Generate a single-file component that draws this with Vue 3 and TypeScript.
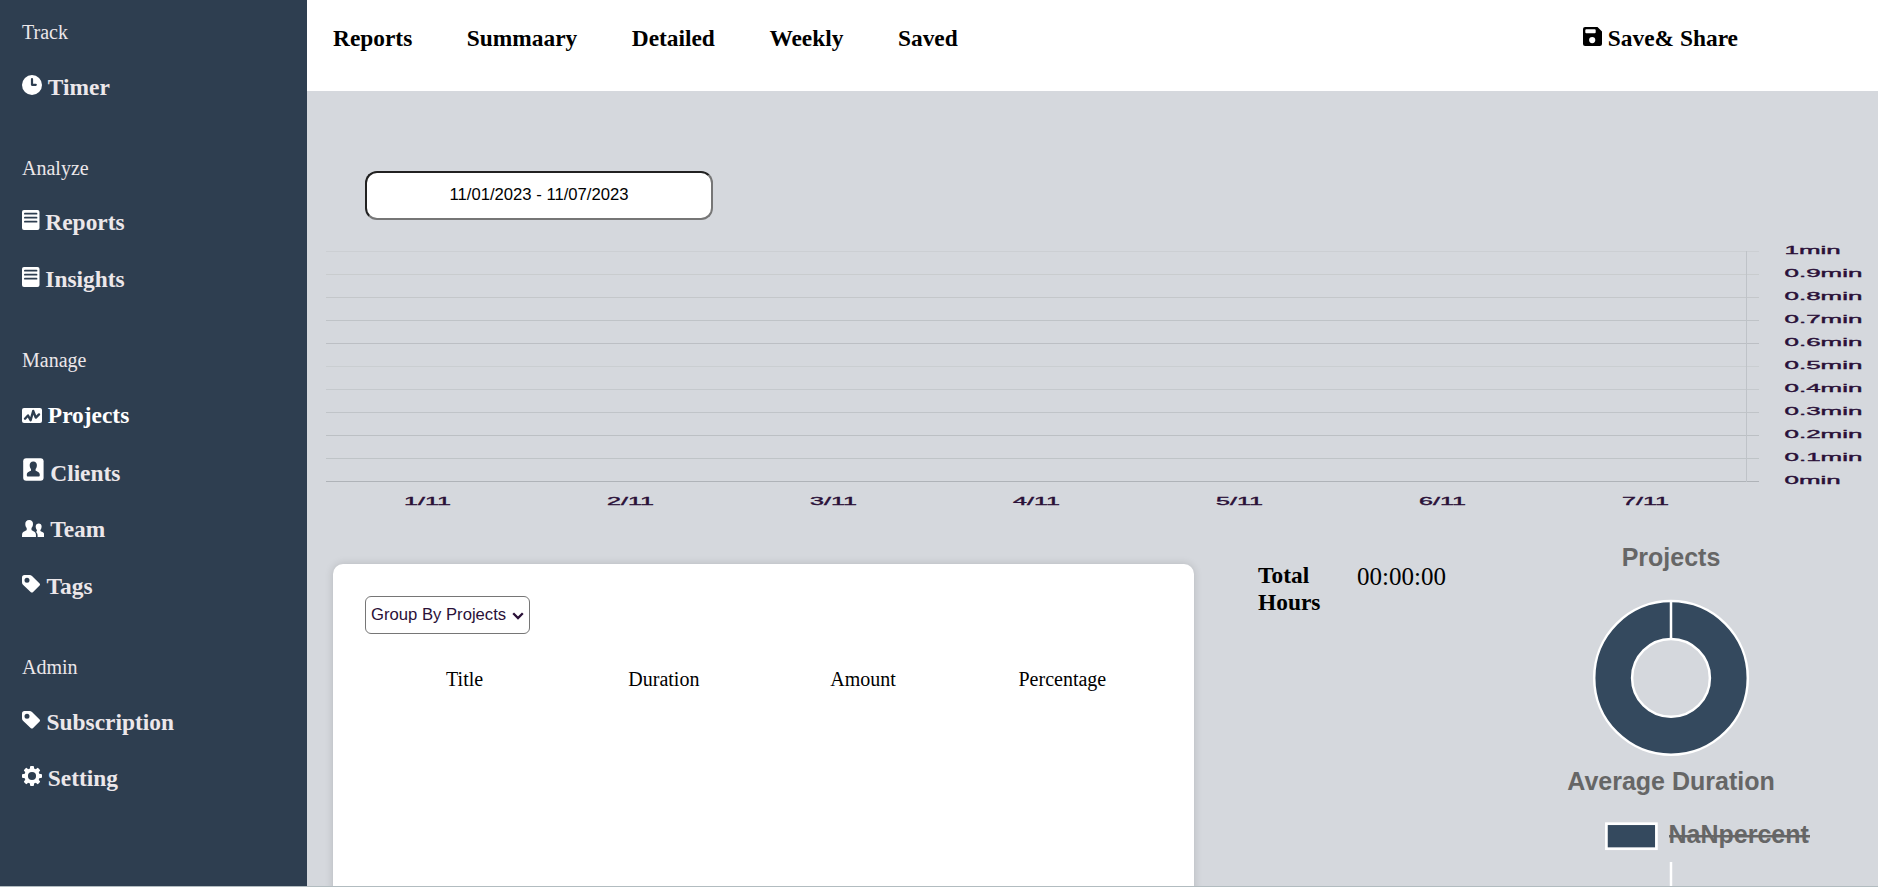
<script setup lang="ts">
interface NavItem {
  label: string
  icon: string
  active?: boolean
}
interface NavGroup {
  title: string
  items: NavItem[]
}

const groups: NavGroup[] = [
  { title: 'Track', items: [{ label: 'Timer', icon: 'clock' }] },
  {
    title: 'Analyze',
    items: [
      { label: 'Reports', icon: 'note' },
      { label: 'Insights', icon: 'note' },
    ],
  },
  {
    title: 'Manage',
    items: [
      { label: 'Projects', icon: 'pulse', active: true },
      { label: 'Clients', icon: 'badge' },
      { label: 'Team', icon: 'people' },
      { label: 'Tags', icon: 'tag' },
    ],
  },
  {
    title: 'Admin',
    items: [
      { label: 'Subscription', icon: 'tag' },
      { label: 'Setting', icon: 'gear' },
    ],
  },
]

const tabs: string[] = ['Reports', 'Summaary', 'Detailed', 'Weekly', 'Saved']
const columns: string[] = ['Title', 'Duration', 'Amount', 'Percentage']
const days: string[] = ['1/11', '2/11', '3/11', '4/11', '5/11', '6/11', '7/11']
const teeth: number[] = [0, 45, 90, 135, 180, 225, 270, 315]

const ticks = [
  { label: '1min', color: '#cccfd3' },
  { label: '0.9min', color: '#c9ccce' },
  { label: '0.8min', color: '#c4c7ca' },
  { label: '0.7min', color: '#bfc3c7' },
  { label: '0.6min', color: '#bcbfc4' },
  { label: '0.5min', color: '#caced1' },
  { label: '0.4min', color: '#c5c9cd' },
  { label: '0.3min', color: '#c0c4c8' },
  { label: '0.2min', color: '#bcc0c4' },
  { label: '0.1min', color: '#bfc4c7' },
  { label: '0min', color: '#afb3b8' },
]
</script>

<template>
  <div class="app">
    <div class="shell">
      <aside class="sidebar">
        <section v-for="g in groups" :key="g.title" class="group">
          <div class="group-title">{{ g.title }}</div>
          <div
            v-for="item in g.items"
            :key="item.label"
            class="item"
            :class="[`item-${item.icon}`, { active: item.active }]"
          >
            <svg v-if="item.icon === 'clock'" class="icon" width="20" height="20" viewBox="0 0 20 20">
              <circle cx="10" cy="10" r="10" />
              <path class="cut-line" d="M10 4.200v5.600h3.800" />
            </svg>
            <svg v-else-if="item.icon === 'note'" class="icon" width="17.5" height="20" viewBox="0 0 17.5 20">
              <rect width="17.5" height="20" rx="2" />
              <path class="cut-thin" d="M2.900 3.700h11.600M2.900 7.700h11.600M2.900 11.700h11.600" />
            </svg>
            <svg v-else-if="item.icon === 'pulse'" class="icon" width="20" height="15" viewBox="0 0 20 15">
              <rect width="20" height="15" rx="2" />
              <path class="cut-pulse" d="M3 10.700l3-3.200 2.600 4.800L11.200 3l2.600 6.600L17 6.400" />
            </svg>
            <svg v-else-if="item.icon === 'badge'" class="icon" width="22.4" height="23" viewBox="0 0 22.4 23">
              <rect x="1.2" y="0.2" width="20.4" height="22.6" rx="3" />
              <path
                class="cut"
                d="M11.300 3.600c-2.500 0-3.800 1.700-3.600 4.100.1 1.500.7 2.500 1.300 3.300v1.700c-1.700.9-4 1.300-4.200 4-.1 1.200.4 1.900 1.400 1.900h10.200c1 0 1.500-.7 1.400-1.900-.2-2.700-2.500-3.100-4.200-4v-1.700c.6-.8 1.200-1.800 1.300-3.300.2-2.400-1.100-4.100-3.600-4.100z"
              />
            </svg>
            <svg v-else-if="item.icon === 'people'" class="icon" width="22.4" height="17" viewBox="0 0 22.4 17">
              <path
                d="M7.200 0C4.600 0 3.100 1.700 3.300 4.300c.1 1.700.6 2.900 1.400 3.700v2C3.300 11.200.5 11.500.1 14.200L0 17h14l-.1-2.800C13.500 11.500 10.900 11.200 9.500 10V8c.8-.8 1.400-2 1.500-3.700C11.200 1.700 9.700 0 7.200 0z"
              />
              <path
                d="M16.800 3.500c-1.900 0-3.300 1.300-3.100 3.600.1 1.300.6 2.300 1.200 3v1.200l-1 .5c1 .8 1.500 1.900 1.700 3.200L15.600 17h6.800c.1-3.900-.8-4.400-2.100-5.100-.8-.4-1.500-.6-1.900-1V10c.6-.7 1.100-1.700 1.200-2.900.2-2.300-1-3.600-2.800-3.600z"
              />
            </svg>
            <svg v-else-if="item.icon === 'tag'" class="icon" width="18.75" height="20" viewBox="0 0 15 16">
              <path
                fill-rule="evenodd"
                d="M0 3Q0 .8 2 .8h4q1.200 0 2 .7l6.100 6.100q.7.800 0 1.600l-5.400 5.300q-.8.700-1.600 0L.8 8.500Q0 7.700 0 6.500zM4 2.900a2 2 0 1 0 0 4 2 2 0 0 0 0-4z"
              />
            </svg>
            <svg v-else class="icon" width="20" height="20" viewBox="0 0 20 20">
              <rect
                v-for="a in teeth"
                :key="a"
                x="8"
                y="0"
                width="4"
                height="5"
                rx="1"
                :transform="`rotate(${a} 10 10)`"
              />
              <circle class="gear-ring" cx="10" cy="10" r="5.900" />
            </svg>
            <span>{{ item.label }}</span>
          </div>
        </section>
      </aside>

      <main class="main">
        <header class="topbar">
          <nav class="tabs">
            <a v-for="t in tabs" :key="t" class="tab">{{ t }}</a>
          </nav>
          <div class="save">
            <svg class="save-icon" width="19" height="19" viewBox="0 0 19 19">
              <path
                fill-rule="evenodd"
                d="M2.100 0h12.400L19 4.500v12.400a2.100 2.100 0 0 1-2.100 2.100H2.100A2.100 2.100 0 0 1 0 16.900V2.100A2.100 2.100 0 0 1 2.100 0zM3.300 2.200q-1 0-1 1v2q0 1 1 1h8.400q1 0 1-1v-2q0-1-1-1zM9.200 10a3.100 3.100 0 1 0 0 6.200 3.100 3.100 0 0 0 0-6.200z"
              />
            </svg>
            <span>Save&amp; Share</span>
          </div>
        </header>

        <div class="range">11/01/2023 - 11/07/2023</div>

        <svg class="chart" width="1571" height="290" viewBox="307 230 1571 290">
          <g shape-rendering="crispEdges">
            <rect v-for="(t, i) in ticks" :key="t.label" x="326" :y="251 + 23 * i" width="1433" height="1" :fill="t.color" />
            <rect x="1746" y="251" width="1" height="231" fill="#bfc3c8" />
          </g>
          <text
            v-for="(t, i) in ticks"
            :key="'l' + t.label"
            class="axis"
            :transform="`translate(1784.5 ${254.300 + 23 * i}) scale(2.360 1)`"
          >{{ t.label }}</text>
          <text
            v-for="(d, i) in days"
            :key="d"
            class="axis mid"
            :transform="`translate(${427.5 + 203 * i} 505) scale(2.280 1)`"
          >{{ d }}</text>
        </svg>

        <div class="bottom">
          <section class="card">
            <div class="select">
              <span>Group By Projects</span>
              <svg width="12" height="8" viewBox="0 0 12 8"><path d="M1.200 1.200L6 6l4.800-4.800" /></svg>
            </div>
            <div class="thead">
              <div v-for="c in columns" :key="c">{{ c }}</div>
            </div>
          </section>

          <div class="total">
            <div class="total-label">Total Hours</div>
            <div class="total-value">00:00:00</div>
          </div>

          <svg class="donuts" width="320" height="346" viewBox="1511 540 320 346">
            <text class="title" x="1671" y="565.900">Projects</text>
            <circle cx="1671" cy="677.900" r="58" fill="none" stroke="#34495e" stroke-width="37.500" />
            <g fill="none" stroke="#fff" stroke-width="2.500">
              <circle cx="1671" cy="677.900" r="76.800" />
              <circle cx="1671" cy="677.900" r="38.900" />
              <path d="M1671 601v38" />
              <path d="M1671 862v24" />
            </g>
            <text class="title" x="1671" y="789.800">Average Duration</text>
            <rect x="1606.400" y="823.700" width="50" height="25" fill="#34495e" stroke="#fff" stroke-width="2.700" />
            <text class="title legend" x="1668.500" y="843.200">NaNpercent</text>
            <path d="M1669 836.200h141" stroke="#666" stroke-width="2.500" />
          </svg>
        </div>
      </main>
    </div>
    <div class="edge"></div>
  </div>
</template>

<style>
body {
  margin: 0;
  overflow: hidden;
}
</style>

<style scoped>
.app {
  width: 1878px;
  height: 887px;
  display: flex;
  flex-direction: column;
  font-family: 'Liberation Serif', 'Times New Roman', serif;
  font-size: 20px;
  color: #000;
}
.shell {
  height: 886px;
  display: flex;
  overflow: hidden;
}
.edge {
  height: 1px;
  background: #b2bcc0;
}
.sidebar {
  box-sizing: border-box;
  width: 307px;
  flex: none;
  padding: 12px 22px 0;
  background: #2e3e50;
  color: #ece7ea;
}
.group {
  margin-bottom: 32px;
}
.group-title {
  height: 47px;
  line-height: 41px;
}
.group:nth-child(2) .group-title {
  height: 46px;
}
.item {
  box-sizing: border-box;
  display: flex;
  align-items: baseline;
  height: 57px;
  line-height: 57px;
  font-size: 23.400px;
  font-weight: 700;
  gap: 5.850px;
  white-space: nowrap;
}
.item-badge {
  padding-top: 1px;
}
.item-gear {
  margin-top: -1px;
}
.item.active {
  color: #fff;
}
.icon {
  flex: none;
  fill: #fff;
}
.icon .cut {
  fill: #2e3e50;
}
.cut-line,
.cut-thin,
.cut-pulse {
  fill: none;
  stroke: #2e3e50;
  stroke-linecap: round;
  stroke-linejoin: round;
}
.cut-line {
  stroke-width: 2.200;
}
.cut-thin {
  stroke-width: 1.800;
}
.cut-pulse {
  stroke-width: 2.400;
}
.icon .gear-ring {
  fill: none;
  stroke: #fff;
  stroke-width: 3.700;
}
.main {
  flex: 1;
  min-width: 0;
  background: #d5d8dd;
}
.topbar {
  box-sizing: border-box;
  height: 91px;
  padding: 18px 140px 0 26px;
  background: #fff;
  display: flex;
  justify-content: space-between;
  font-size: 23.400px;
  font-weight: 700;
  line-height: 40px;
}
.tabs {
  display: flex;
  gap: 54.500px;
}
.save {
  display: flex;
  align-items: baseline;
  gap: 5.850px;
  white-space: nowrap;
}
.range {
  box-sizing: border-box;
  width: 348px;
  height: 49px;
  margin: 80px 0 10px 58px;
  border: 2px solid;
  border-color: #212121 #767676 #767676 #212121;
  border-radius: 12px;
  background: #fff;
  font: 16.670px/43px 'Liberation Sans', Arial, sans-serif;
  text-align: center;
}
.chart {
  display: block;
}
.axis {
  font: 11px 'Liberation Sans', Arial, sans-serif;
  fill: #2a1038;
  stroke: #2a1038;
  stroke-width: 0.350;
}
.mid {
  text-anchor: middle;
}
.bottom {
  display: flex;
  align-items: flex-start;
  padding: 20px 0 0 26px;
}
.card {
  box-sizing: border-box;
  width: 861px;
  height: 400px;
  flex: none;
  margin-top: 24px;
  padding: 32px;
  border-radius: 10px;
  background: #fff;
  box-shadow: 0 0 8px rgba(0, 0, 0, 0.15);
}
.select {
  box-sizing: border-box;
  width: 165px;
  height: 38px;
  padding: 0 5px;
  display: flex;
  align-items: center;
  justify-content: space-between;
  border: 1px solid #767676;
  border-radius: 6px;
  font: 16.670px/36px 'Liberation Sans', Arial, sans-serif;
  color: #2a1038;
  white-space: nowrap;
}
.select svg {
  fill: none;
  stroke: #2a1038;
  stroke-width: 2.300;
  margin-top: 2px;
}
.thead {
  display: grid;
  grid-template-columns: repeat(4, 1fr);
  margin-top: 32px;
  line-height: 27px;
  text-align: center;
}
.total {
  display: flex;
  width: 317px;
  flex: none;
  padding: 22px 0 0 64px;
  box-sizing: border-box;
}
.total-label {
  width: 99px;
  font-size: 23.400px;
  line-height: 27px;
  font-weight: 700;
}
.total-value {
  font-size: 25px;
  line-height: 29px;
}
.donuts {
  flex: none;
}
.title {
  font: 700 25px 'Liberation Sans', Arial, sans-serif;
  fill: #666;
  text-anchor: middle;
}
.legend {
  text-anchor: start;
}
</style>
